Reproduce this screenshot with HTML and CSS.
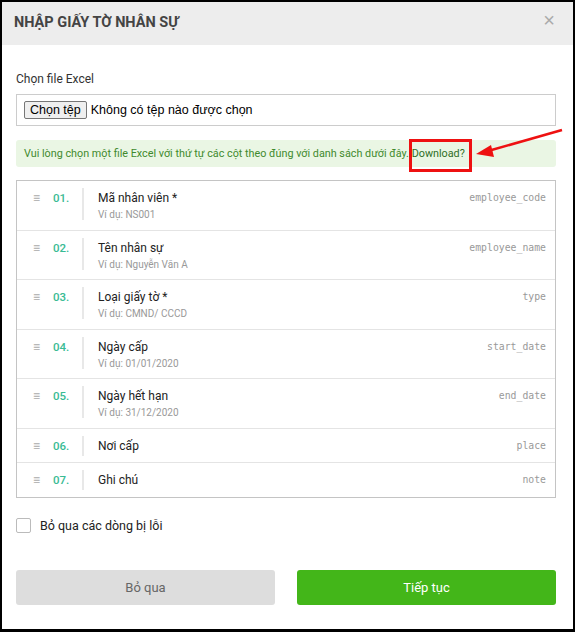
FILE: index.html
```html
<!DOCTYPE html>
<html lang="vi">
<head>
<meta charset="utf-8">
<link rel="stylesheet" href="styles.css">
</head>
<body>
<div class="modal">
  <div class="modal-header">
    <h1 class="title">NHẬP GIẤY TỜ NHÂN SỰ</h1>
    <span class="close">&times;</span>
  </div>
  <div class="modal-body">
    <div class="field-label">Chọn file Excel</div>
    <div class="file-box">
      <span class="file-btn">Chọn tệp</span>
      <span class="file-name">Không có tệp nào được chọn</span>
    </div>
    <div class="alert">Vui lòng chọn một file Excel với thứ tự các cột theo đúng với danh sách dưới đây. <a class="dl">Download?</a></div>
    <div class="list">
      <div class="row tall">
        <span class="handle">&#8801;</span><span class="num">01.</span><span class="divider"></span>
        <div class="info"><div class="name">Mã nhân viên *</div><div class="ex">Ví dụ: NS001</div></div>
        <span class="key">employee_code</span>
      </div>
      <div class="row tall">
        <span class="handle">&#8801;</span><span class="num">02.</span><span class="divider"></span>
        <div class="info"><div class="name">Tên nhân sự</div><div class="ex">Ví dụ: Nguyễn Văn A</div></div>
        <span class="key">employee_name</span>
      </div>
      <div class="row tall">
        <span class="handle">&#8801;</span><span class="num">03.</span><span class="divider"></span>
        <div class="info"><div class="name">Loại giấy tờ *</div><div class="ex">Ví dụ: CMND/ CCCD</div></div>
        <span class="key">type</span>
      </div>
      <div class="row tall">
        <span class="handle">&#8801;</span><span class="num">04.</span><span class="divider"></span>
        <div class="info"><div class="name">Ngày cấp</div><div class="ex">Ví dụ: 01/01/2020</div></div>
        <span class="key">start_date</span>
      </div>
      <div class="row tall">
        <span class="handle">&#8801;</span><span class="num">05.</span><span class="divider"></span>
        <div class="info"><div class="name">Ngày hết hạn</div><div class="ex">Ví dụ: 31/12/2020</div></div>
        <span class="key">end_date</span>
      </div>
      <div class="row">
        <span class="handle">&#8801;</span><span class="num">06.</span><span class="divider"></span>
        <div class="info"><div class="name">Nơi cấp</div></div>
        <span class="key">place</span>
      </div>
      <div class="row last">
        <span class="handle">&#8801;</span><span class="num">07.</span><span class="divider"></span>
        <div class="info"><div class="name">Ghi chú</div></div>
        <span class="key">note</span>
      </div>
    </div>
    <label class="check">
      <span class="box"></span>
      <span>Bỏ qua các dòng bị lỗi</span>
    </label>
    <div class="actions">
      <button class="btn btn-cancel">Bỏ qua</button>
      <button class="btn btn-ok">Tiếp tục</button>
    </div>
  </div>
  <div class="annot-box"></div>
  <svg class="annot-arrow" width="100" height="40" viewBox="0 0 100 40">
    <line x1="88" y1="2" x2="14" y2="23" stroke="#ee1111" stroke-width="2.6"/>
    <polygon points="2,26 17,17 20,29" fill="#ee1111"/>
  </svg>
</div>
</body>
</html>
```
FILE: styles.css
```css
* { box-sizing: border-box; }
html, body { margin: 0; padding: 0; }
body {
  background: #000;
  width: 575px;
  height: 632px;
  padding: 2px 2px 3px 2px;
  font-family: Roboto, "Noto Sans", Arial, sans-serif;
}
.modal {
  position: relative;
  background: #fff;
  width: 571px;
  height: 627px;
}
.modal-header {
  height: 43px;
  background: #ededed;
  display: flex;
  align-items: center;
  justify-content: space-between;
  padding: 0 18px 2px 12px;
}
.title {
  margin: 0;
  font-size: 14.5px;
  font-weight: 700;
  color: #444;
}
.close {
  color: #aaa;
  font-size: 20px;
  line-height: 1;
  font-family: Arial, sans-serif;
  margin-top: -5px;
}
.modal-body {
  padding: 26px 17px 0 14px;
}
.field-label {
  font-size: 12px;
  line-height: 16px;
  color: #333;
}
.file-box {
  margin-top: 7px;
  height: 32px;
  border: 1px solid #ccc;
  display: flex;
  align-items: center;
  padding-left: 7px;
  font-family: "Liberation Sans", Arial, sans-serif;
  font-size: 12.5px;
}
.file-btn {
  display: inline-block;
  background: #efefef;
  border: 1px solid #767676;
  border-radius: 2px;
  padding: 0 5px;
  height: 18px;
  line-height: 16px;
  color: #000;
  margin-right: 4px;
}
.file-name { color: #000; }
.alert {
  margin-top: 14px;
  height: 27px;
  background: #eaf6e4;
  border-radius: 3px;
  padding-left: 8px;
  font-size: 10.8px;
  line-height: 27px;
  color: #3f8a2d;
  white-space: nowrap;
}
.dl { color: #2f6e1f; }
.list {
  margin-top: 13px;
  border: 1px solid #c4c4c4;
}
.row {
  display: flex;
  align-items: flex-start;
  padding: 9px 9px 8px 16px;
  border-bottom: 1px solid #e4e4e4;
  height: 34px;
}
.row.tall { height: 49.5px; }
.row.last { border-bottom: 0; }
.handle {
  width: 20px;
  color: #aaa;
  font-size: 12px;
  line-height: 17px;
}
.num {
  width: 29px;
  color: #3abb94;
  font-size: 11.5px;
  font-weight: 500;
  line-height: 16px;
}
.divider {
  width: 2px;
  height: 20px;
  background: #e8e8e8;
  margin-top: -2px;
  margin-right: 14px;
}
.row.tall .divider { height: 32px; margin-top: -2px; }
.info { flex: 1; }
.name {
  font-size: 12px;
  line-height: 16px;
  color: #222;
}
.ex {
  font-size: 10px;
  line-height: 14px;
  color: #999;
  margin-top: 2px;
}
.key {
  font-family: "DejaVu Sans Mono", monospace;
  font-size: 9.8px;
  line-height: 16px;
  color: #999;
}
.check {
  margin-top: 20px;
  display: flex;
  align-items: center;
  gap: 9px;
  font-size: 12.5px;
  color: #222;
}
.box {
  width: 15px;
  height: 15px;
  border: 1px solid #bbb;
  border-radius: 2px;
}
.actions {
  margin-top: 37px;
  display: flex;
  gap: 22px;
}
.btn {
  flex: 1;
  height: 35px;
  border: 0;
  border-radius: 3px;
  font-family: Roboto, Arial, sans-serif;
  font-size: 13px;
}
.btn-cancel { background: #dddddd; color: #666; }
.btn-ok { background: #43b619; color: #fff; }
.annot-box {
  position: absolute;
  left: 407px;
  top: 137px;
  width: 63px;
  height: 33px;
  border: 3px solid #ee1111;
}
.annot-arrow {
  position: absolute;
  left: 472px;
  top: 126px;
}
```
